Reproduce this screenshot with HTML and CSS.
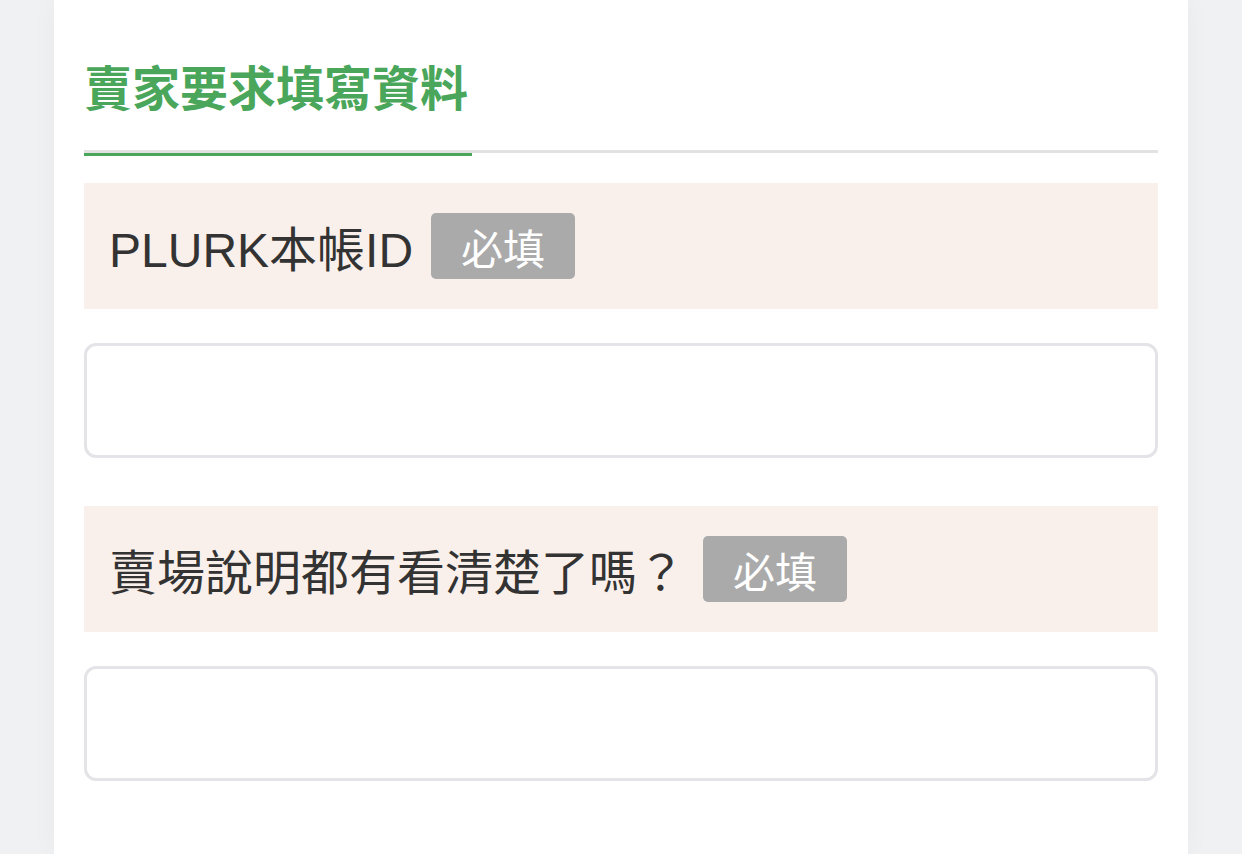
FILE: index.html
```html
<!DOCTYPE html>
<html lang="zh-Hant">
<head>
  <meta charset="UTF-8">
  <title>賣家要求填寫資料</title>
  <link rel="stylesheet" href="styles.css">
</head>
<body>

<div class="card">
  <div class="title-wrap">
    <h2 class="title">賣家要求填寫資料</h2>
  </div>
  <div class="title-bar"></div>

  <div class="field-label">
    <span>PLURK本帳ID</span>
    <span class="badge">必填</span>
  </div>
  <input type="text" class="field-input">

  <div class="field-label">
    <span>賣場說明都有看清楚了嗎？</span>
    <span class="badge">必填</span>
  </div>
  <input type="text" class="field-input">
</div>

</body>
</html>
```

FILE: styles.css
```css
* {
  box-sizing: border-box;
}
html, body {
  height: 100%;
}
body {
  margin: 0;
  background-color: #f0f1f3;
  font-family: "Liberation Sans", "Noto Sans CJK TC", sans-serif;
  color: #333;
  overflow: hidden;
}

.card {
  width: 1134px;
  min-height: 100%;
  margin: 0 54px;
  padding: 0 30px;
  background-color: #fff;
  box-shadow: 0 0 24px rgba(0, 0, 0, 0.04);
}

.title-wrap {
  padding-top: 52px;
  padding-bottom: 31px;
  border-bottom: 3px solid #e2e2e2;
}

.title {
  margin: 0;
  font-family: "Noto Sans CJK TC", sans-serif;
  font-size: 48px;
  font-weight: 700;
  line-height: 67px;
  color: #4aa65a;
}

.title-bar {
  width: 388px;
  height: 3px;
  background-color: #4aa65a;
}

.field-label {
  display: flex;
  align-items: center;
  height: 126px;
  margin-top: 27px;
  padding-left: 25px;
  background-color: #faf0eb;
  font-size: 48px;
}

.field-input + .field-label {
  margin-top: 48px;
}

.badge {
  display: inline-flex;
  align-items: center;
  height: 66px;
  margin-left: 18px;
  padding: 0 30px;
  background-color: #aaa;
  border-radius: 5px;
  color: #fff;
  font-family: "Noto Sans CJK TC", sans-serif;
  font-size: 42px;
}

.field-input {
  display: block;
  width: 100%;
  height: 115px;
  margin-top: 34px;
  border: 3px solid #e3e3e8;
  border-radius: 12px;
  font-size: 42px;
  padding: 0 24px;
  outline: none;
}
```
